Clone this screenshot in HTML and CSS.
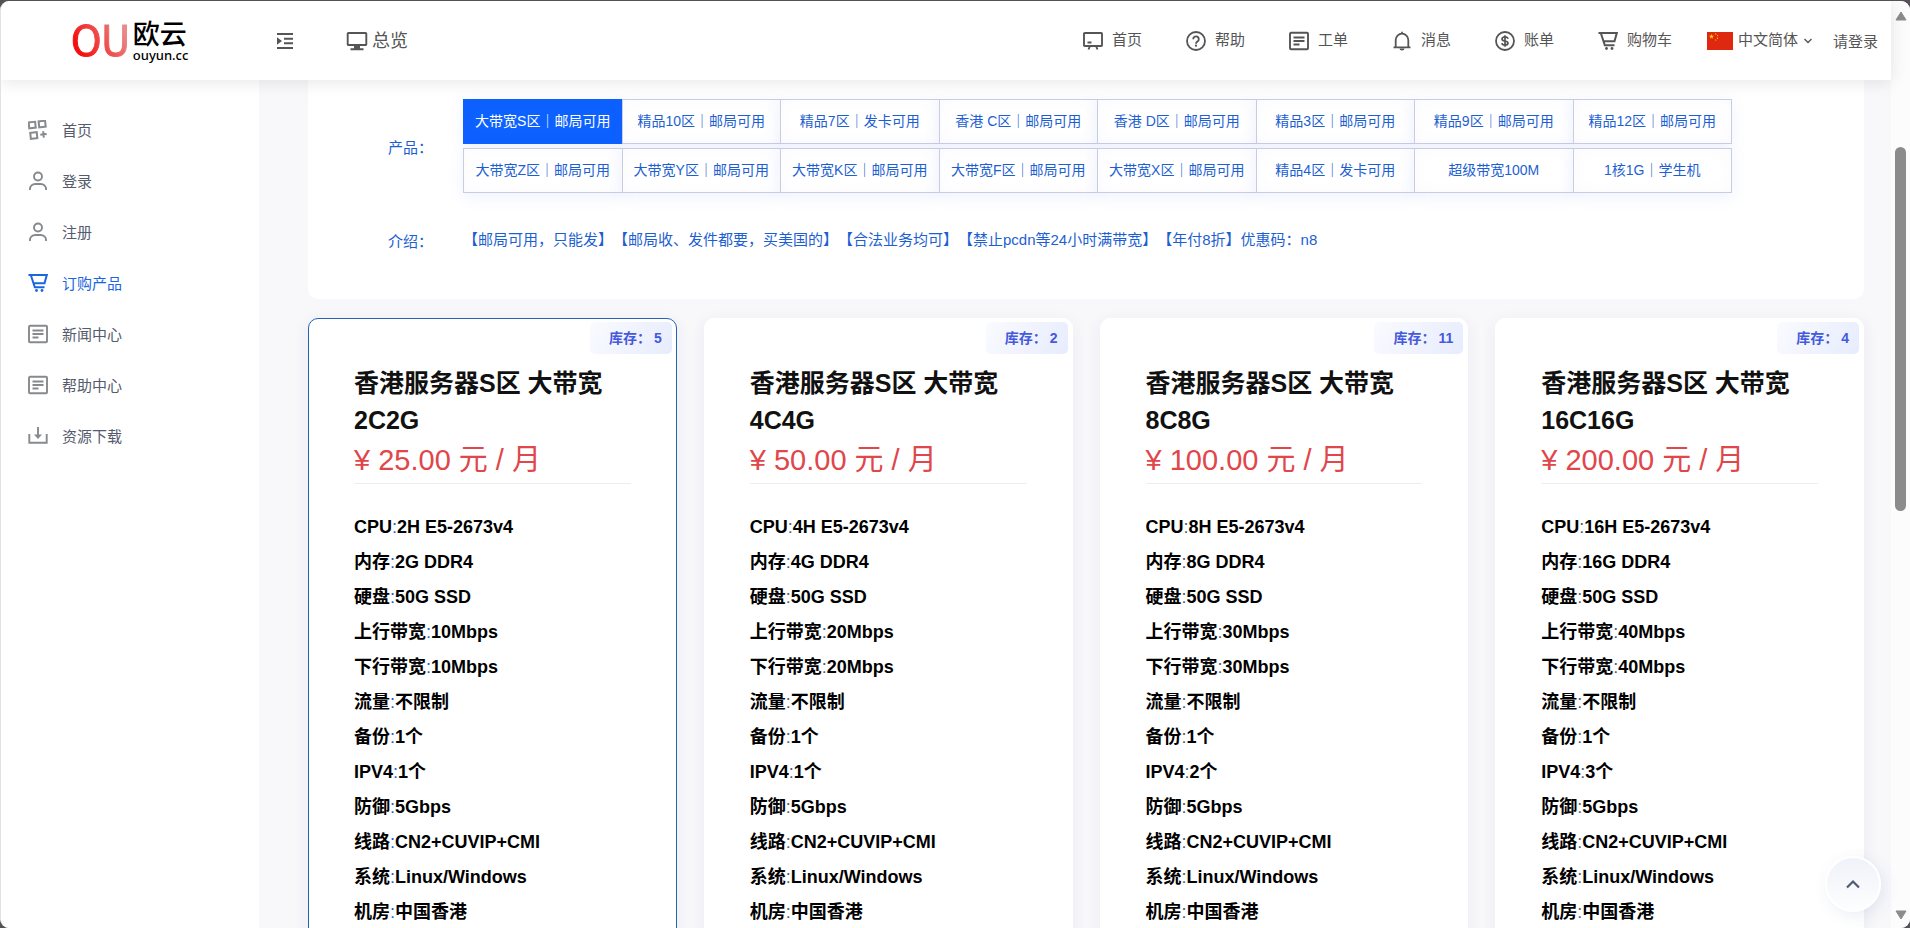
FILE: index.html
```html
<!DOCTYPE html>
<html lang="zh-CN">
<head>
<meta charset="utf-8">
<title>订购产品 - 欧云</title>
<link rel="stylesheet" href="styles.css">
</head>
<body>
<svg class="sprite" aria-hidden="true">
  <symbol id="i-indent" viewBox="0 0 18 18"><path d="M1 2h16M8 6.700h9M8 11.300h9M1 16h16" stroke="currentColor" stroke-width="2" fill="none"/><path d="M1 5.200v7.600l5-3.800z" fill="currentColor"/></symbol>
  <symbol id="i-monitor" viewBox="0 0 22 20"><path d="M2.500 2h17a.8.8 0 0 1 .8.8v10.400a.8.8 0 0 1-.8.8h-17a.8.8 0 0 1-.8-.8V2.800a.8.8 0 0 1 .8-.8zM4.500 18.300h13" stroke="currentColor" stroke-width="1.900" fill="none"/><path d="M8 15h6v3H8z" fill="currentColor"/></symbol>
  <symbol id="i-board" viewBox="0 0 20 20"><path d="M1.800 2h16.400c.5 0 .8.300.8.8v11.400c0 .5-.3.800-.8.800H1.800c-.5 0-.8-.3-.8-.8V2.800c0-.5.300-.8.800-.8zM4.500 11.500h4M7 15l-1.500 3.500M13 15l1.500 3.500" stroke="currentColor" stroke-width="1.900" fill="none"/></symbol>
  <symbol id="i-help" viewBox="0 0 20 20"><circle cx="10" cy="10" r="9" stroke="currentColor" stroke-width="1.800" fill="none"/><path d="M7.200 8.200a2.800 2.800 0 1 1 4.300 2.300c-1 .7-1.500 1-1.500 2.200" stroke="currentColor" stroke-width="1.800" fill="none"/><circle cx="10" cy="14.700" r="1.100" fill="currentColor"/></symbol>
  <symbol id="i-list" viewBox="0 0 20 20"><rect x="1" y="1.800" width="18" height="16.400" rx="1" stroke="currentColor" stroke-width="1.900" fill="none"/><path d="M4.500 6.500h11M4.500 10h11M4.500 13.500h6" stroke="currentColor" stroke-width="1.800"/></symbol>
  <symbol id="i-bell" viewBox="0 0 20 20"><path d="M1.500 16.300h17M3.700 16V9a6.300 6.300 0 0 1 12.600 0v7M10 2.700V.8" stroke="currentColor" stroke-width="1.800" fill="none"/><path d="M7.500 17.500h5a2.500 2.100 0 0 1-5 0z" fill="currentColor"/></symbol>
  <symbol id="i-coin" viewBox="0 0 20 20"><circle cx="10" cy="10" r="9" stroke="currentColor" stroke-width="1.800" fill="none"/><path d="M13 7.800c-.3-1.300-1.400-1.900-3-1.900s-3 .6-3 2 1.200 1.800 3 2.100 3 .8 3 2.100-1.300 2-3 2-2.900-.7-3.100-2M10 4.200v11.600" stroke="currentColor" stroke-width="1.700" fill="none"/></symbol>
  <symbol id="i-cart" viewBox="0 0 20 20"><path d="M.5 2h18.300l-2.300 8.300H6M2.800 2l4 12.300h9.700" stroke="currentColor" stroke-width="2" fill="none"/><circle cx="8.500" cy="17.500" r="1.400" fill="currentColor"/><circle cx="14" cy="17.500" r="1.400" fill="currentColor"/></symbol>
  <symbol id="i-apps" viewBox="0 0 20 20"><g stroke="currentColor" stroke-width="2" fill="none" transform="rotate(-6 10 10)"><rect x="1.500" y="1.500" width="6.500" height="6"/><rect x="11.500" y="1.500" width="6.500" height="6"/><rect x="2" y="12" width="6.500" height="6"/><path d="M15 11.800v6.400M11.800 15h6.400"/></g></symbol>
  <symbol id="i-user" viewBox="0 0 20 20"><circle cx="10" cy="5.500" r="4" stroke="currentColor" stroke-width="1.900" fill="none"/><path d="M1.900 19v-.5c0-3.500 2.500-5.500 5.500-5.500h5.200c3 0 5.500 2 5.500 5.500v.5" stroke="currentColor" stroke-width="1.900" fill="none"/></symbol>
  <symbol id="i-download" viewBox="0 0 20 20"><path d="M1.300 8v8.700h17.400V8M10 1v9" stroke="currentColor" stroke-width="1.900" fill="none"/><path d="M6 8.500h8l-4 4.500z" fill="currentColor"/></symbol>
  <symbol id="i-down" viewBox="0 0 10 10"><path d="M1.500 3l3.500 3.500L8.500 3" stroke="currentColor" stroke-width="1.400" fill="none"/></symbol>
  <symbol id="i-up" viewBox="0 0 16 16"><path d="M2 11.500l6-6 6 6" stroke="currentColor" stroke-width="2.200" fill="none"/></symbol>
</svg>

<div class="window">
  <div class="app">
    <header class="topbar">
      <a class="logo" href="#">
        <span class="logo-mark">OU</span>
        <span class="logo-text"><span class="logo-name">欧云</span><span class="logo-domain">ouyun.cc</span></span>
      </a>
      <button class="toggle" type="button" aria-label="收起菜单"><svg class="icon-toggle"><use href="#i-indent"/></svg></button>
      <a class="overview" href="#"><svg class="icon-monitor"><use href="#i-monitor"/></svg><span class="label">总览</span></a>
      <nav class="topnav">
        <a href="#"><svg class="icon"><use href="#i-board"/></svg><span class="label">首页</span></a>
        <a href="#"><svg class="icon"><use href="#i-help"/></svg><span class="label">帮助</span></a>
        <a href="#"><svg class="icon"><use href="#i-list"/></svg><span class="label">工单</span></a>
        <a href="#"><svg class="icon"><use href="#i-bell"/></svg><span class="label">消息</span></a>
        <a href="#"><svg class="icon"><use href="#i-coin"/></svg><span class="label">账单</span></a>
        <a href="#"><svg class="icon"><use href="#i-cart"/></svg><span class="label">购物车</span></a>
      </nav>
      <button class="lang" type="button">
        <svg class="flag" viewBox="0 0 26 18"><path fill="#de2910" d="M0 0h26v18H0z"/><path fill="#ffde00" d="M4.500 2l.6 1.800H7L5.500 4.900l.6 1.800-1.600-1.100-1.600 1.100.6-1.800L2 3.800h1.900z"/><g fill="#ffde00"><circle cx="8.700" cy="1.900" r=".6"/><circle cx="10.500" cy="3.600" r=".6"/><circle cx="10.500" cy="6.200" r=".6"/><circle cx="8.700" cy="8" r=".6"/></g></svg>
        <span class="label">中文简体</span>
        <svg class="icon-down"><use href="#i-down"/></svg>
      </button>
      <a class="login" href="#"><span class="label">请登录</span></a>
    </header>

    <div class="body">
      <nav class="sidebar">
        <a href="#"><svg class="icon"><use href="#i-apps"/></svg>首页</a>
        <a href="#"><svg class="icon"><use href="#i-user"/></svg>登录</a>
        <a href="#"><svg class="icon"><use href="#i-user"/></svg>注册</a>
        <a class="active" href="#"><svg class="icon"><use href="#i-cart"/></svg>订购产品</a>
        <a href="#"><svg class="icon"><use href="#i-list"/></svg>新闻中心</a>
        <a href="#"><svg class="icon"><use href="#i-list"/></svg>帮助中心</a>
        <a href="#"><svg class="icon"><use href="#i-download"/></svg>资源下载</a>
      </nav>

      <main class="content">
        <section class="panel">
          <div class="row">
            <span class="row-label">产品：</span>
            <div class="products">
              <button class="selected" type="button">大带宽S区｜邮局可用</button>
              <button type="button">精品10区｜邮局可用</button>
              <button type="button">精品7区｜发卡可用</button>
              <button type="button">香港 C区｜邮局可用</button>
              <button type="button">香港 D区｜邮局可用</button>
              <button type="button">精品3区｜邮局可用</button>
              <button type="button">精品9区｜邮局可用</button>
              <button type="button">精品12区｜邮局可用</button>
              <button type="button">大带宽Z区｜邮局可用</button>
              <button type="button">大带宽Y区｜邮局可用</button>
              <button type="button">大带宽K区｜邮局可用</button>
              <button type="button">大带宽F区｜邮局可用</button>
              <button type="button">大带宽X区｜邮局可用</button>
              <button type="button">精品4区｜发卡可用</button>
              <button type="button">超级带宽100M</button>
              <button type="button">1核1G｜学生机</button>
            </div>
          </div>
          <div class="row">
            <span class="row-label">介绍：</span>
            <p class="intro">【邮局可用，只能发】【邮局收、发件都要，买美国的】【合法业务均可】【禁止pcdn等24小时满带宽】【年付8折】优惠码：n8</p>
          </div>
        </section>

        <section class="cards">
          <article class="card current">
            <div class="stock">库存：<span>5</span></div>
            <h2>香港服务器S区 大带宽 2C2G</h2>
            <p class="price">¥ 25.00 元 / 月</p>
            <ul>
              <li><b>CPU</b>:<b>2H E5-2673v4</b></li>
              <li><b>内存</b>:<b>2G DDR4</b></li>
              <li><b>硬盘</b>:<b>50G SSD</b></li>
              <li><b>上行带宽</b>:<b>10Mbps</b></li>
              <li><b>下行带宽</b>:<b>10Mbps</b></li>
              <li><b>流量</b>:<b>不限制</b></li>
              <li><b>备份</b>:<b>1个</b></li>
              <li><b>IPV4</b>:<b>1个</b></li>
              <li><b>防御</b>:<b>5Gbps</b></li>
              <li><b>线路</b>:<b>CN2+CUVIP+CMI</b></li>
              <li><b>系统</b>:<b>Linux/Windows</b></li>
              <li><b>机房</b>:<b>中国香港</b></li>
            </ul>
          </article>
          <article class="card">
            <div class="stock">库存：<span>2</span></div>
            <h2>香港服务器S区 大带宽 4C4G</h2>
            <p class="price">¥ 50.00 元 / 月</p>
            <ul>
              <li><b>CPU</b>:<b>4H E5-2673v4</b></li>
              <li><b>内存</b>:<b>4G DDR4</b></li>
              <li><b>硬盘</b>:<b>50G SSD</b></li>
              <li><b>上行带宽</b>:<b>20Mbps</b></li>
              <li><b>下行带宽</b>:<b>20Mbps</b></li>
              <li><b>流量</b>:<b>不限制</b></li>
              <li><b>备份</b>:<b>1个</b></li>
              <li><b>IPV4</b>:<b>1个</b></li>
              <li><b>防御</b>:<b>5Gbps</b></li>
              <li><b>线路</b>:<b>CN2+CUVIP+CMI</b></li>
              <li><b>系统</b>:<b>Linux/Windows</b></li>
              <li><b>机房</b>:<b>中国香港</b></li>
            </ul>
          </article>
          <article class="card">
            <div class="stock">库存：<span>11</span></div>
            <h2>香港服务器S区 大带宽 8C8G</h2>
            <p class="price">¥ 100.00 元 / 月</p>
            <ul>
              <li><b>CPU</b>:<b>8H E5-2673v4</b></li>
              <li><b>内存</b>:<b>8G DDR4</b></li>
              <li><b>硬盘</b>:<b>50G SSD</b></li>
              <li><b>上行带宽</b>:<b>30Mbps</b></li>
              <li><b>下行带宽</b>:<b>30Mbps</b></li>
              <li><b>流量</b>:<b>不限制</b></li>
              <li><b>备份</b>:<b>1个</b></li>
              <li><b>IPV4</b>:<b>2个</b></li>
              <li><b>防御</b>:<b>5Gbps</b></li>
              <li><b>线路</b>:<b>CN2+CUVIP+CMI</b></li>
              <li><b>系统</b>:<b>Linux/Windows</b></li>
              <li><b>机房</b>:<b>中国香港</b></li>
            </ul>
          </article>
          <article class="card">
            <div class="stock">库存：<span>4</span></div>
            <h2>香港服务器S区 大带宽 16C16G</h2>
            <p class="price">¥ 200.00 元 / 月</p>
            <ul>
              <li><b>CPU</b>:<b>16H E5-2673v4</b></li>
              <li><b>内存</b>:<b>16G DDR4</b></li>
              <li><b>硬盘</b>:<b>50G SSD</b></li>
              <li><b>上行带宽</b>:<b>40Mbps</b></li>
              <li><b>下行带宽</b>:<b>40Mbps</b></li>
              <li><b>流量</b>:<b>不限制</b></li>
              <li><b>备份</b>:<b>1个</b></li>
              <li><b>IPV4</b>:<b>3个</b></li>
              <li><b>防御</b>:<b>5Gbps</b></li>
              <li><b>线路</b>:<b>CN2+CUVIP+CMI</b></li>
              <li><b>系统</b>:<b>Linux/Windows</b></li>
              <li><b>机房</b>:<b>中国香港</b></li>
            </ul>
          </article>
        </section>
      </main>
    </div>
    <button class="to-top" type="button" aria-label="返回顶部"><svg class="icon-up"><use href="#i-up"/></svg></button>
  </div>

  <div class="scrollbar" aria-hidden="true">
    <svg class="arrow" viewBox="0 0 12 10"><path d="M6 1l5 8H1z" fill="#8b8b8b" stroke="#8b8b8b" stroke-linejoin="round"/></svg>
    <div class="track"><div class="thumb"></div></div>
    <svg class="arrow" viewBox="0 0 12 10"><path d="M6 9l5-8H1z" fill="#8b8b8b" stroke="#8b8b8b" stroke-linejoin="round"/></svg>
  </div>
</div>
</body>
</html>
```

FILE: styles.css
```css
* {
  box-sizing: border-box;
}

body {
  margin: 0;
  padding-top: 1px;
  height: 100vh;
  overflow: hidden;
  background: #545257;
  color: #555b6d;
  font-family: "Liberation Sans", "Noto Sans CJK SC", sans-serif;
  font-size: 15px;
  text-spacing-trim: space-all;
}

a {
  color: inherit;
  text-decoration: none;
}

button {
  border: 0;
  padding: 0;
  background: none;
  color: inherit;
  font: inherit;
  cursor: pointer;
}

svg {
  display: block;
  flex: none;
}

.sprite {
  position: absolute;
  width: 0;
  height: 0;
}

.window {
  display: flex;
  height: 100%;
  overflow: hidden;
  border-left: 1px solid #e2e2e4;
  border-radius: 9px;
  background: #f8f8fb;
}

.app {
  position: relative;
  flex: 1;
  min-width: 0;
  display: flex;
  flex-direction: column;
}

/* Top bar */
.topbar {
  position: relative;
  z-index: 2;
  flex: none;
  display: flex;
  align-items: center;
  height: 79px;
  padding: 0 13px 0 70px;
  background: #fff;
  color: #555;
  box-shadow: 0 2px 16px rgba(0, 0, 0, 0.1);
}

.topbar .label {
  padding-bottom: 4px;
}

.logo {
  display: flex;
  align-items: center;
  gap: 4px;
  width: 205px;
}

.logo-mark {
  font-family: "Liberation Sans Narrow", "DejaVu Sans Condensed", sans-serif;
  font-size: 43px;
  line-height: 44px;
  background: linear-gradient(60deg, #f51010 20%, #e88a88 85%);
  background-clip: text;
  color: transparent;
  -webkit-text-stroke: 1px transparent;
}

.logo-text {
  display: flex;
  flex-direction: column;
  align-items: flex-start;
  margin-left: -1px;
  color: #000;
}

.logo-name {
  font-size: 27px;
  font-weight: 500;
  line-height: 28px;
}

.logo-domain {
  font-family: "Noto Sans", sans-serif;
  font-size: 13px;
  font-weight: 500;
  line-height: 12px;
}

.icon-toggle {
  width: 18px;
  height: 18px;
}

.overview {
  display: flex;
  align-items: center;
  gap: 4px;
  margin-left: 52px;
  font-size: 18px;
}

.icon-monitor {
  width: 22px;
  height: 20px;
}

.icon {
  width: 20px;
  height: 20px;
}

.topnav {
  display: flex;
  gap: 44px;
  margin-left: auto;
}

.topnav a {
  display: flex;
  align-items: center;
  gap: 9px;
}

.lang {
  display: flex;
  align-items: center;
  gap: 5px;
  margin: 0 20px 0 35px;
}

.flag {
  width: 26px;
  height: 18px;
}

.icon-down {
  width: 10px;
  height: 10px;
}

/* Page body */
.body {
  flex: 1;
  min-height: 0;
  display: flex;
}

.sidebar {
  flex: none;
  width: 258px;
  padding-top: 24px;
  background: #fff;
}

.sidebar a {
  display: flex;
  align-items: center;
  gap: 14px;
  height: 51px;
  padding-left: 27px;
}

.sidebar .icon {
  color: #868a8d;
}

.sidebar .active,
.sidebar .active .icon {
  color: #1a66e0;
}

.content {
  flex: 1;
  min-width: 0;
  padding: 0 27px 0 49px;
}

.panel {
  display: flex;
  flex-direction: column;
  gap: 35px;
  padding: 19px 132px 47px 80px;
  border-radius: 0 0 10px 10px;
  background: #fff;
  color: #1d5fd2;
}

.row {
  display: flex;
  align-items: center;
}

.row-label {
  flex: none;
  width: 75px;
}

.products {
  flex: 1;
  display: grid;
  grid-template-columns: repeat(8, 1fr);
  row-gap: 4px;
  padding-right: 1px;
}

.products button {
  height: 45px;
  margin-right: -1px;
  padding-bottom: 4px;
  border: 1px solid #c9cde2;
  background: #fff;
  box-shadow: 0 4px 16px rgba(80, 110, 230, 0.09), inset 0 0 16px rgba(80, 110, 230, 0.03);
  font-size: 14px;
  white-space: nowrap;
}

.products .selected {
  border-color: #0d61ff;
  background: #0d61ff;
  color: #fff;
}

.intro {
  margin: 0;
  line-height: 24px;
}

/* Plan cards */
.cards {
  display: grid;
  grid-template-columns: repeat(4, 1fr);
  gap: 27px;
  margin-top: 19px;
}

.card {
  position: relative;
  padding: 46px 45px;
  border: 1px solid #fff;
  border-radius: 10px;
  background: #fff;
  box-shadow: 0 4px 16px rgba(60, 70, 130, 0.08);
}

.card.current {
  border-color: #2463b8;
  color: #1d5fd2;
}

.stock {
  position: absolute;
  top: 3px;
  right: 4px;
  padding: 0 10px 0 19px;
  border-radius: 5px;
  background: linear-gradient(120deg, #fafbff, #e7ecfd);
  color: #4459dc;
  font-size: 14px;
  font-weight: 700;
  line-height: 32px;
}

.stock span {
  margin-left: 3px;
}

.card h2 {
  margin: 0;
  color: #111;
  font-size: 25px;
  line-height: 37px;
}

.price {
  margin: 0 0 26px;
  padding-bottom: 2px;
  border-bottom: 1px solid #ededee;
  color: #e0464a;
  font-size: 29px;
  line-height: 42px;
}

.card ul {
  margin: 0;
  padding: 0;
  list-style: none;
  font-size: 18px;
  line-height: 35px;
}

.card b {
  color: #000;
}

.to-top {
  position: absolute;
  z-index: 3;
  right: 10px;
  bottom: 16px;
  display: grid;
  place-items: center;
  width: 56px;
  height: 56px;
  border: 2px solid #fff;
  border-radius: 50%;
  background: linear-gradient(#eff2f8, #fdfeff);
  box-shadow: 4px 4px 16px rgba(60, 80, 150, 0.1);
  color: #4f5b75;
}

.icon-up {
  width: 16px;
  height: 16px;
}

/* Scroll bar */
.scrollbar {
  flex: none;
  display: flex;
  flex-direction: column;
  align-items: center;
  width: 19px;
  padding: 10px 0 8px;
  background: #fcfcfc;
}

.arrow {
  width: 12px;
  height: 10px;
}

.track {
  flex: 1;
  display: flex;
  flex-direction: column;
}

.thumb {
  width: 11px;
  height: 41%;
  margin-top: 126px;
  border-radius: 6px;
  background: #8b8b8b;
}
```
